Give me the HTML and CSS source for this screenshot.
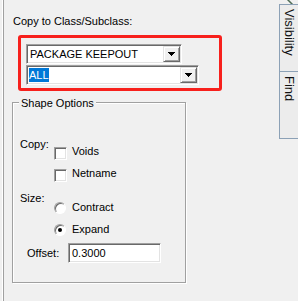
FILE: index.html
```html
<!DOCTYPE html>
<html lang="en">
<head>
    <meta charset="UTF-8">
    <title>Copy Shape</title>
    <link rel="stylesheet" href="styles.css">
</head>
<body>

    <div class="window">
        <div class="panel">
            <div class="caption">Copy to Class/Subclass:</div>

            <div class="marked">
                <div class="combo combo-class">
                    <span class="combo-text">PACKAGE KEEPOUT</span>
                    <span class="combo-btn">
                        <svg width="7" height="4" viewBox="0 0 7 4" shape-rendering="crispEdges"><path d="M0 0h7v1H0zM1 1h5v1H1zM2 2h3v1H2zM3 3h1v1H3z" fill="#000"/></svg>
                    </span>
                </div>
                <div class="combo combo-sub">
                    <span class="combo-text"><span class="sel">ALL</span></span>
                    <span class="combo-btn">
                        <svg width="7" height="4" viewBox="0 0 7 4" shape-rendering="crispEdges"><path d="M0 0h7v1H0zM1 1h5v1H1zM2 2h3v1H2zM3 3h1v1H3z" fill="#000"/></svg>
                    </span>
                </div>
            </div>

            <div class="group">
                <div class="legend">Shape Options</div>

                <div class="opt-block copy-block">
                    <div class="opt-label">Copy:</div>
                    <div class="opt-list">
                        <div class="opt-row"><span class="check"></span>Voids</div>
                        <div class="opt-row"><span class="check"></span>Netname</div>
                    </div>
                </div>

                <div class="opt-block size-block">
                    <div class="opt-label">Size:</div>
                    <div class="opt-list">
                        <div class="opt-row"><span class="radio"></span>Contract</div>
                        <div class="opt-row"><span class="radio on"></span>Expand</div>
                    </div>
                </div>

                <div class="offset-row">
                    <span class="offset-label">Offset:</span>
                    <div class="field">0.3000</div>
                </div>
            </div>
        </div>

        <div class="tabs">
            <svg class="tab-corner" width="18" height="4" viewBox="0 0 18 4"><path d="M8 -1L14 5" stroke="#4d6b55" stroke-width="1.5"/></svg>
            <div class="tab">Visibility</div>
            <div class="tab">Find</div>
        </div>
    </div>

</body>
</html>
```

FILE: styles.css
```css
body {
    margin: 0;
    background-color: #f0f0f0;
    font-family: "Liberation Sans", Arial, sans-serif;
    font-size: 11px;
    line-height: 13px;
    color: #000;
    overflow: hidden;
}
.window {
    display: flex;
    height: 301px;
}
.panel {
    width: 279px;
    margin-left: 3px;
    border-left: 1px solid #a0a0a0;
    box-shadow: -1px 0 0 #fff;
    padding: 15px 0 0 9px;
    box-sizing: border-box;
}
.caption {
    height: 13px;
}

/* red marker round the two combos */
.marked {
    box-sizing: border-box;
    width: 204px;
    height: 56px;
    margin: 7px 0 0 5px;
    border: 3px solid #f7201c;
    border-radius: 3px;
    padding: 6px 0 0 5px;
    display: flex;
    flex-direction: column;
    gap: 1px;
}
.combo, .field {
    box-sizing: border-box;
    height: 20px;
    border: 1px solid;
    border-color: #a0a0a0 #fff #fff #a0a0a0;
    box-shadow: inset 1px 1px 0 #696969, inset -1px -1px 0 #e3e3e3;
    background-color: #fff;
}
.combo {
    display: flex;
    padding: 1px;
}
.combo-class {
    width: 156px;
}
.combo-sub {
    width: 173px;
}
.combo-text {
    flex: 1;
    line-height: 16px;
    padding-left: 2px;
    white-space: nowrap;
}
.sel {
    display: inline-block;
    vertical-align: top;
    margin: 1px 0 0 -1px;
    height: 14px;
    line-height: 14px;
    background-color: #0078d7;
    color: #fff;
}
.combo-btn {
    box-sizing: border-box;
    width: 17px;
    height: 16px;
    background-color: #f0f0f0;
    border: 1px solid;
    border-color: #e3e3e3 #696969 #696969 #e3e3e3;
    box-shadow: inset 1px 1px 0 #fff, inset -1px -1px 0 #a0a0a0;
    display: flex;
    align-items: center;
    justify-content: center;
}

/* group box */
.group {
    box-sizing: border-box;
    width: 174px;
    height: 181px;
    margin: 11px 0 0 -1px;
    border: 1px solid #a0a0a0;
    box-shadow: 1px 1px 0 #fff, inset 1px 1px 0 #fff;
}
.legend {
    width: fit-content;
    margin: -6px 0 0 6px;
    padding: 0 2px;
    background-color: #f0f0f0;
}
.opt-block {
    display: flex;
    padding-left: 7px;
}
.copy-block {
    margin-top: 28px;
}
.copy-block .opt-list {
    padding-top: 7px;
}
.size-block {
    margin-top: 12px;
}
.size-block .opt-list {
    padding-top: 9px;
}
.opt-label {
    width: 34px;
}
.opt-row {
    display: flex;
    align-items: flex-start;
    height: 13px;
    margin-bottom: 9px;
}
.opt-row:last-child {
    margin-bottom: 0;
}
.check {
    box-sizing: border-box;
    width: 13px;
    height: 13px;
    margin: 2px 5px 0 0;
    border: 1px solid;
    border-color: #a0a0a0 #fff #fff #a0a0a0;
    box-shadow: inset 1px 1px 0 #696969, inset -1px -1px 0 #e3e3e3;
    background-color: #fff;
}
.radio {
    box-sizing: border-box;
    width: 12px;
    height: 12px;
    margin: 1px 6px 0 0;
    border-radius: 50%;
    border: 1px solid;
    border-color: #a0a0a0 #fff #fff #a0a0a0;
    box-shadow: inset 1px 1px 0 #696969;
    background-color: #fff;
    display: flex;
    align-items: center;
    justify-content: center;
}
.radio.on::after {
    content: "";
    width: 4px;
    height: 4px;
    border-radius: 50%;
    background-color: #000;
}
.offset-row {
    display: flex;
    align-items: center;
    margin-top: 7px;
    padding-left: 14px;
}
.offset-label {
    width: 41px;
}
.field {
    width: 93px;
    line-height: 18px;
    padding-left: 3px;
}

/* side tabs */
.tabs {
    display: flex;
    flex-direction: column;
    width: 19px;
    flex-shrink: 0;
}
.tab-corner {
    display: block;
}
.tab {
    box-sizing: border-box;
    height: 68px;
    border: 1px solid #8ca1b6;
    border-right: none;
    padding-top: 4px;
    background-color: #ececec;
    writing-mode: vertical-rl;
    font-size: 13px;
    line-height: 17px;
    color: #111;
}
.tab + .tab {
    margin-top: -1px;
}
```
